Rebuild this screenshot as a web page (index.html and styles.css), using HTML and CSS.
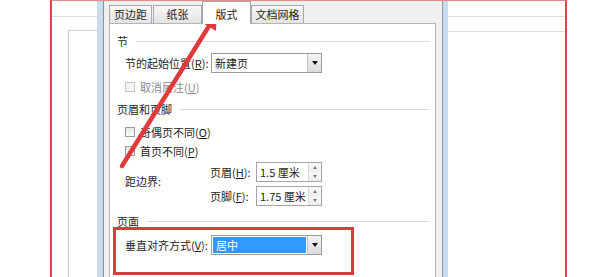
FILE: index.html
```html
<!DOCTYPE html>
<html>
<head>
  <title>页面设置 - 版式</title>
  <link rel="stylesheet" href="styles.css">
</head>
<body>
  <div class="screen">
    <div class="gutter"></div>

    <div class="frame">
      <div class="page-left">
        <div class="ruler"></div>
        <div class="sheet"></div>
      </div>

      <div class="dialog">
        <div class="tabs">
          <div class="tab tab-margin">页边距</div>
          <div class="tab tab-paper">纸张</div>
          <div class="tab tab-layout active">版式</div>
          <div class="tab tab-grid">文档网格</div>
        </div>

        <div class="pane">
          <div class="group-title first"><span>节</span></div>
          <div class="row">
            <label class="label">节的起始位置(<u>R</u>):</label>
            <div class="select">
              <span class="select-text">新建页</span>
              <span class="select-btn"></span>
            </div>
          </div>
          <div class="check disabled row-cancel">
            <span class="box"></span>取消尾注(<u>U</u>)
          </div>

          <div class="group-title"><span>页眉和页脚</span></div>
          <div class="check row-odd">
            <span class="box"></span>奇偶页不同(<u>O</u>)
          </div>
          <div class="check row-first">
            <span class="box"></span>首页不同(<u>P</u>)
          </div>

          <div class="edges">
            <div class="edges-label">距边界:</div>
            <div class="edges-fields">
              <div class="field">
                <label class="small-label">页眉(<u>H</u>):</label>
                <div class="spinner">
                  <span>1.5 厘米</span>
                  <span class="spin-btns"><i class="up"></i><i class="down"></i></span>
                </div>
              </div>
              <div class="field">
                <label class="small-label">页脚(<u>F</u>):</label>
                <div class="spinner">
                  <span>1.75 厘米</span>
                  <span class="spin-btns"><i class="up"></i><i class="down"></i></span>
                </div>
              </div>
            </div>
          </div>

          <div class="group-title last"><span>页面</span></div>
          <div class="highlight">
            <div class="row">
              <label class="label">垂直对齐方式(<u>V</u>):</label>
              <div class="select">
                <span class="select-text chosen">居中</span>
                <span class="select-btn"></span>
              </div>
            </div>
          </div>
        </div>
      </div>

      <div class="page-right">
        <div class="ruler"></div>
        <div class="ruler second"></div>
      </div>
    </div>

    <svg class="arrow" width="607" height="277" viewBox="0 0 607 277">
      <line x1="122" y1="166" x2="209" y2="26" stroke="#e03a3c" stroke-width="4.5" stroke-linecap="round"/>
      <polygon points="217,10 216,31 201,22" fill="#e03a3c"/>
    </svg>
  </div>
</body>
</html>
```

FILE: styles.css
```css
body {
  margin: 0;
  background: #fff;
  font-family: "Noto Sans CJK SC", "Microsoft YaHei", sans-serif;
  font-size: 11px;
  color: #1e1e1e;
  overflow: hidden;
}
u {
  text-decoration: underline;
}
.screen {
  position: relative;
  display: flex;
  width: 607px;
  height: 277px;
  overflow: hidden;
}
.gutter {
  width: 50px;
  flex: none;
}
.frame {
  display: flex;
  height: 277px;
  border-left: 2px solid #d9474a;
  border-right: 2px solid #d9474a;
  border-top: 1px solid #e58a8c;
  box-sizing: border-box;
}

/* document page behind the dialog */
.page-left {
  width: 45px;
  flex: none;
}
.page-left .ruler {
  margin-top: 15px;
  border-top: 1px solid #dedede;
}
.sheet {
  margin-top: 13px;
  margin-left: 16px;
  height: 260px;
  border-left: 1px solid #c9c9c9;
  border-top: 1px solid #d4d4d4;
}
.page-right {
  width: 117px;
  flex: none;
}
.page-right .ruler {
  margin-top: 15px;
  border-top: 1px solid #dedede;
}
.page-right .ruler.second {
  margin-top: 14px;
}

/* dialog */
.dialog {
  width: 327px;
  flex: none;
  background: #f0f0f0;
  border-left: 6px solid #c8dbf1;
  border-right: 5px solid #c8dbf1;
  box-shadow: inset 1px 0 0 #8f8f8f, inset -1px 0 0 #9a9a9a;
  padding: 0 7px 0 6px;
}
.tabs {
  display: flex;
  align-items: flex-end;
  height: 22px;
}
.tab {
  height: 17px;
  line-height: 17px;
  text-align: center;
  border: 1px solid #a9a9a9;
  border-bottom: none;
  background: linear-gradient(#f7f7f7, #e4e4e4);
  box-sizing: content-box;
}
.tab-margin { width: 41px; }
.tab-paper { width: 47px; margin-left: 1px; border-left: 1px solid #a9a9a9; }
.tab-layout { width: 47px; }
.tab-grid { width: 51px; }
.tab.active {
  height: 22px;
  line-height: 24px;
  background: #fff;
  position: relative;
  margin-bottom: -1px;
  z-index: 1;
}
.pane {
  background: #fff;
  border: 1px solid #b4b4b4;
  height: 260px;
  padding: 10px 5px 0 7px;
}

.group-title {
  display: flex;
  align-items: center;
  height: 14px;
  margin-top: 8px;
}
.group-title.first {
  margin-top: 0;
}
.group-title.last {
  height: 12px;
  margin-top: 9px;
}
.group-title::after {
  content: "";
  flex: 1;
  border-top: 1px solid #dcdcdc;
  margin-left: 8px;
}

.row {
  display: flex;
  align-items: center;
  margin-top: 5px;
  padding-left: 8px;
}
.label {
  width: 86px;
  flex: none;
}
.select {
  display: flex;
  width: 109px;
  height: 18px;
  border: 1px solid #9c9c9c;
  background: #fff;
}
.select-text {
  flex: 1;
  line-height: 18px;
  padding-left: 3px;
}
.select-text.chosen {
  background: #3399ff;
  color: #fff;
  margin: 1px;
  line-height: 16px;
}
.select-btn {
  width: 13px;
  border-left: 1px solid #c4c4c4;
  background: linear-gradient(#f4f4f4, #dcdcdc);
  position: relative;
}
.select-btn::after {
  content: "";
  position: absolute;
  left: 4px;
  top: 7px;
  border-left: 3px solid transparent;
  border-right: 3px solid transparent;
  border-top: 4px solid #111;
}

.check {
  display: flex;
  align-items: center;
  height: 14px;
  padding-left: 8px;
}
.box {
  width: 8px;
  height: 8px;
  border: 1px solid #9a9a9a;
  background: linear-gradient(#e8e8e8, #fafafa);
  margin-right: 5px;
}
.check.disabled {
  color: #8a8a8a;
}
.check.disabled .box {
  border-color: #c8c8c8;
  background: #f4f4f4;
}
.row-cancel { margin-top: 7px; }
.row-odd { margin-top: 9px; }
.row-first { margin-top: 5px; }

.edges {
  display: flex;
  align-items: center;
  margin-top: 4px;
  padding-left: 8px;
}
.edges-label {
  width: 85px;
  flex: none;
  margin-top: -6px;
}
.field {
  display: flex;
  align-items: center;
}
.field + .field {
  margin-top: 4px;
}
.small-label {
  width: 46px;
  flex: none;
}
.spinner {
  display: flex;
  align-items: center;
  width: 61px;
  height: 18px;
  border: 1px solid #a6a6a6;
  padding-left: 3px;
  box-sizing: content-box;
}
.spinner span:first-child {
  flex: 1;
}
.spin-btns {
  display: flex;
  flex-direction: column;
  width: 12px;
  height: 18px;
  border-left: 1px solid #dadada;
}
.spin-btns i {
  flex: 1;
  position: relative;
  background: linear-gradient(#fafafa, #ececec);
}
.spin-btns i.up::after,
.spin-btns i.down::after {
  content: "";
  position: absolute;
  left: 4px;
  border-left: 2px solid transparent;
  border-right: 2px solid transparent;
}
.spin-btns i.up::after {
  top: 3px;
  border-bottom: 3px solid #7a7a7a;
}
.spin-btns i.down::after {
  top: 3px;
  border-top: 3px solid #7a7a7a;
}

.highlight {
  margin-left: -4px;
  width: 234px;
  height: 42px;
  border: 3px solid #dc3b3e;
  padding-left: 1px;
}
.highlight .row {
  margin-top: 5px;
}

.arrow {
  position: absolute;
  left: 0;
  top: 0;
  pointer-events: none;
}
```
